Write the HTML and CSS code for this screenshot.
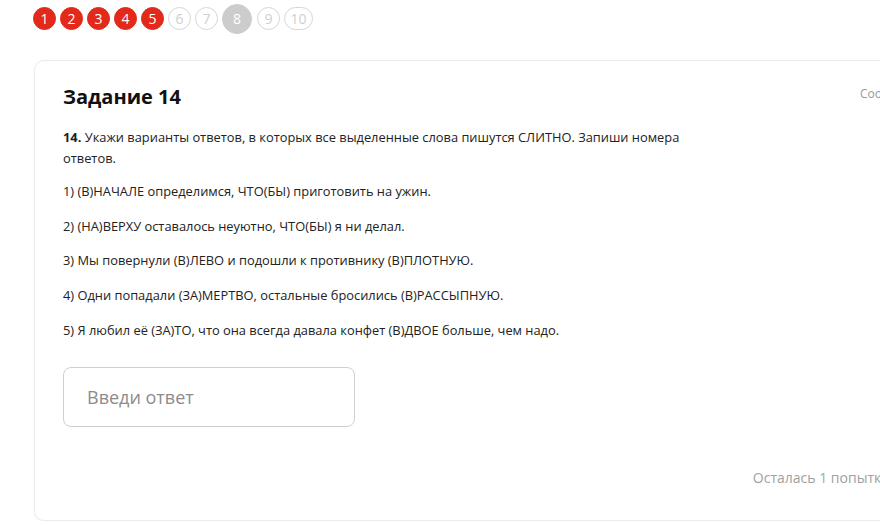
FILE: index.html
```html
<!DOCTYPE html>
<html lang="ru">
<head>
  <meta charset="UTF-8">
  <meta name="viewport" content="width=device-width, initial-scale=1.0">
  <title>Задание 14</title>
  <link rel="stylesheet" href="styles.css">
</head>
<body>
  <div class="steps">
    <span class="step done">1</span>
    <span class="step done">2</span>
    <span class="step done">3</span>
    <span class="step done">4</span>
    <span class="step done">5</span>
    <span class="step">6</span>
    <span class="step">7</span>
    <span class="step current">8</span>
    <span class="step">9</span>
    <span class="step wide">10</span>
  </div>

  <div class="task-card">
    <div class="task-head">
      <h2>Задание 14</h2>
      <a class="report" href="#">Сообщить об ошибке</a>
    </div>
    <div class="task-body">
      <p class="question"><b>14.</b> Укажи варианты ответов, в которых все выделенные слова пишутся СЛИТНО. Запиши номера ответов.</p>
      <p>1) (В)НАЧАЛЕ определимся, ЧТО(БЫ) приготовить на ужин.</p>
      <p>2) (НА)ВЕРХУ оставалось неуютно, ЧТО(БЫ) я ни делал.</p>
      <p>3) Мы повернули (В)ЛЕВО и подошли к противнику (В)ПЛОТНУЮ.</p>
      <p>4) Одни попадали (ЗА)МЕРТВО, остальные бросились (В)РАССЫПНУЮ.</p>
      <p>5) Я любил её (ЗА)ТО, что она всегда давала конфет (В)ДВОЕ больше, чем надо.</p>
    </div>
    <input class="answer" type="text" placeholder="Введи ответ">
    <div class="task-foot">
      Осталась <span class="count">1</span> попытка
    </div>
  </div>
</body>
</html>
```

FILE: styles.css
```css
html {
  overflow: hidden;
}
body {
  font-family: 'Open Sans', 'Noto Sans', sans-serif;
  background-color: #fff;
  color: #222;
  margin: 0;
  padding: 0;
}

/* Step circles */
.steps {
  display: flex;
  align-items: center;
  gap: 4px;
  height: 37px;
  padding-left: 33px;
}
.step {
  box-sizing: border-box;
  width: 23px;
  height: 23px;
  border-radius: 12px;
  border: 1px solid #d6d6d6;
  color: #cfcfcf;
  font-size: 14px;
  display: flex;
  align-items: center;
  justify-content: center;
}
.step.done {
  background-color: #e2291a;
  border-color: #e2291a;
  color: #fff;
}
.step.current {
  width: 30px;
  height: 30px;
  border-radius: 15px;
  background-color: #cccccc;
  border-color: #cccccc;
  color: #fff;
  margin: 0 1px 0 0;
}
.step.wide {
  width: 29px;
}

/* Task card */
.task-card {
  box-sizing: border-box;
  width: 884px;
  margin: 23px 0 0 34px;
  padding: 22px 28px 0;
  height: 461px;
  border: 1px solid #ebebeb;
  border-radius: 10px;
  box-shadow: 0 1px 3px rgba(0, 0, 0, 0.04);
}
.task-head {
  display: grid;
  grid-template-columns: 1fr 29px;
}
.task-head h2 {
  margin: 0;
  font-size: 20px;
  line-height: 28px;
  font-weight: 700;
  color: #111;
}
.report {
  white-space: nowrap;
  font-size: 12px;
  color: #999;
  text-decoration: none;
  padding-top: 2px;
}
.task-body {
  margin-top: 16px;
  max-width: 640px;
  font-size: 12.85px;
  line-height: 21px;
}
.task-body p {
  margin: 0 0 13.7px;
}
.task-body p.question {
  margin-bottom: 12px;
}
.task-body b {
  font-weight: 700;
}
.answer {
  box-sizing: border-box;
  width: 292px;
  height: 60px;
  margin-top: 13px;
  padding: 0 23px;
  border: 1px solid #cfcfcf;
  border-radius: 8px;
  font-family: inherit;
  font-size: 18px;
  color: #333;
  outline: none;
}
.answer::placeholder {
  color: #8c8c8c;
}
.task-foot {
  margin-top: 41px;
  text-align: right;
  font-size: 14px;
  color: #a0a0a0;
}
.task-foot .count {
  color: #9aa9ba;
}
```
